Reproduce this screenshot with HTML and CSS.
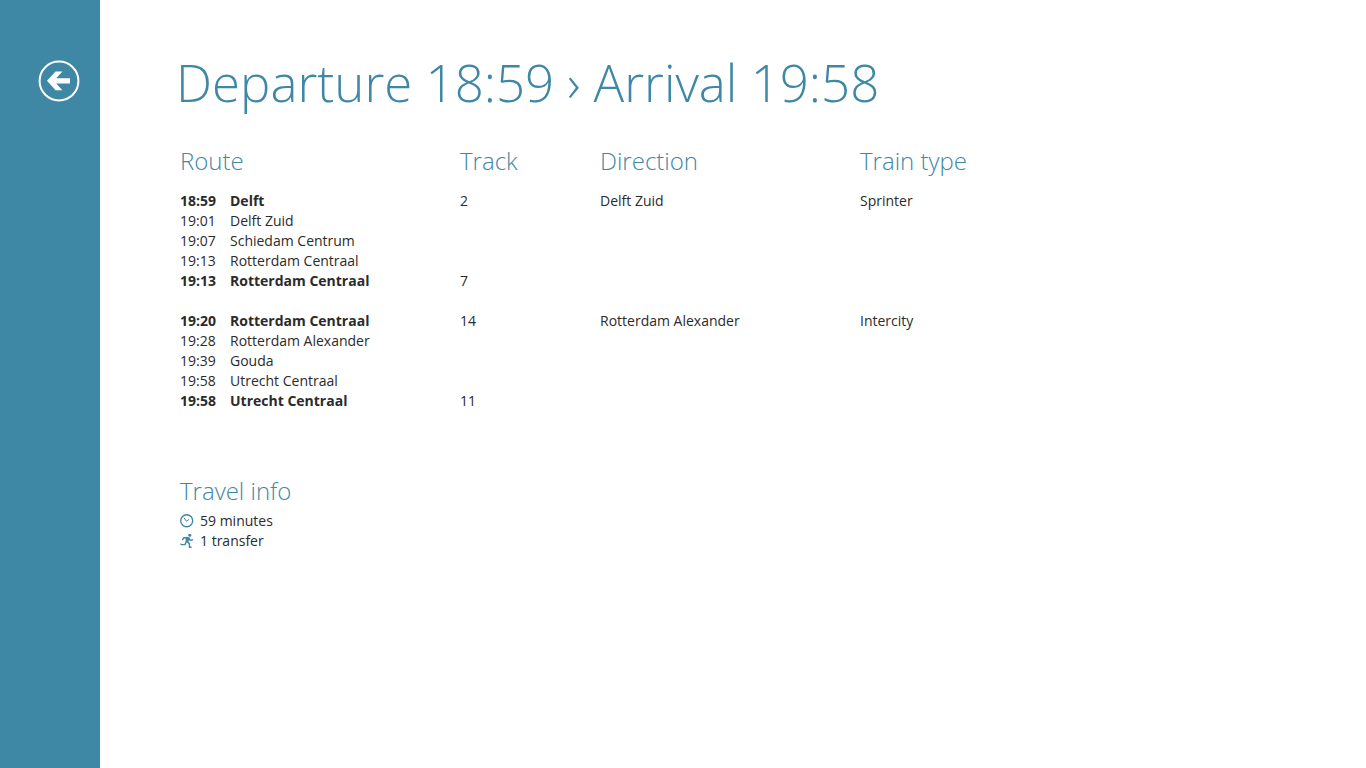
FILE: index.html
```
<!DOCTYPE html>
<html lang="en">
<head>
<meta charset="utf-8">
<meta name="viewport" content="width=device-width, initial-scale=1">
<title>Departure 18:59 › Arrival 19:58</title>
<link rel="stylesheet" href="styles.css">
</head>
<body>
<div class="page">
  <nav class="sidebar">
    <button class="back" type="button" aria-label="Back">
      <svg viewBox="0 0 42 42" aria-hidden="true">
        <circle cx="21" cy="21" r="19.4" fill="none" stroke="#fff" stroke-width="2"/>
        <path d="M9 20.8 17.6 11.4H24.4L18.2 18.2H32V23.4H18.2L24.4 30.2H17.6Z" fill="#fff"/>
      </svg>
    </button>
  </nav>
  <main class="content">
    <h1 class="title">Departure 18:59 › Arrival 19:58</h1>
    <table class="route">
      <colgroup>
        <col class="col-time"><col class="col-station"><col class="col-track"><col class="col-direction"><col>
      </colgroup>
      <thead>
        <tr><th colspan="2" scope="col">Route</th><th scope="col">Track</th><th scope="col">Direction</th><th scope="col">Train type</th></tr>
      </thead>
      <tbody class="leg">
        <tr class="stop"><td>18:59</td><td>Delft</td><td>2</td><td>Delft Zuid</td><td>Sprinter</td></tr>
        <tr><td>19:01</td><td>Delft Zuid</td><td></td><td></td><td></td></tr>
        <tr><td>19:07</td><td>Schiedam Centrum</td><td></td><td></td><td></td></tr>
        <tr><td>19:13</td><td>Rotterdam Centraal</td><td></td><td></td><td></td></tr>
        <tr class="stop"><td>19:13</td><td>Rotterdam Centraal</td><td>7</td><td></td><td></td></tr>
      </tbody>
      <tbody class="leg">
        <tr class="stop"><td>19:20</td><td>Rotterdam Centraal</td><td>14</td><td>Rotterdam Alexander</td><td>Intercity</td></tr>
        <tr><td>19:28</td><td>Rotterdam Alexander</td><td></td><td></td><td></td></tr>
        <tr><td>19:39</td><td>Gouda</td><td></td><td></td><td></td></tr>
        <tr><td>19:58</td><td>Utrecht Centraal</td><td></td><td></td><td></td></tr>
        <tr class="stop"><td>19:58</td><td>Utrecht Centraal</td><td>11</td><td></td><td></td></tr>
      </tbody>
    </table>
    <section class="info">
      <h2 class="subtitle">Travel info</h2>
      <ul class="facts">
        <li>
          <svg viewBox="0 0 14 14" aria-hidden="true"><circle cx="6.7" cy="6.7" r="6" fill="none" stroke="#3f88a5" stroke-width="1.4"/><path d="M4 3.8 6.4 7.2 9 5.4" fill="none" stroke="#3f88a5" stroke-width="1"/></svg>
          59 minutes
        </li>
        <li>
          <svg viewBox="0 0 14 14" aria-hidden="true"><circle cx="9.8" cy="1.2" r="1.5" fill="#3f88a5"/><path d="M5.6 2.8 9.6 3.2 8.4 8 5.6 7.6Z" fill="#3f88a5"/><path d="M7.8 3.8H3.8L2.4 6M8.8 4.2 10.2 6.4 13 5.6M6.8 7.4 9.4 9.6 9.4 13.2H11.6M6.4 7.4 5 10.6H1.4L.5 9.6" fill="none" stroke="#3f88a5" stroke-width="1.4" stroke-linejoin="round"/></svg>
          1 transfer
        </li>
      </ul>
    </section>
  </main>
</div>
</body>
</html>
```
FILE: styles.css
```
* { box-sizing: border-box; }

body {
  margin: 0;
  background: #fff;
  color: #2b2b2b;
  font: 14px/20px "Open Sans", "Noto Sans", sans-serif;
}

.page { display: flex; min-height: 100vh; }

.sidebar {
  flex: 0 0 100px;
  padding: 60px 0 0 38px;
  background: #3f88a5;
}

.back {
  display: block;
  width: 42px;
  height: 42px;
  padding: 0;
  border: 0;
  background: none;
  cursor: pointer;
}

.back svg { display: block; width: 100%; height: 100%; }

.content { flex: 1; min-width: 0; padding: 46px 40px 40px 80px; }

.title, .subtitle, .route th {
  margin: 0;
  color: #3f88a5;
  font-weight: 300;
  text-align: left;
}

.title { margin-left: -4px; font-size: 51px; line-height: 72px; }

.route {
  width: 100%;
  margin-top: 28px;
  border-collapse: collapse;
  table-layout: fixed;
}

.col-time { width: 50px; }
.col-station { width: 230px; }
.col-track { width: 140px; }
.col-direction { width: 260px; }

.route th { padding: 0 0 15px; font-size: 24px; line-height: 30px; }
.subtitle { font-size: 24px; line-height: 30px; }

.route td { height: 20px; padding: 0; }

.stop td:nth-child(-n+2) { font-weight: 700; }

.leg + .leg::before { content: ""; display: table-row; height: 20px; }

.info { margin-top: 65px; }

.facts { margin: 5px 0 0; padding: 0; list-style: none; }
.facts li { display: flex; align-items: center; gap: 6px; }
.facts svg { flex: none; width: 14px; height: 14px; }
```
